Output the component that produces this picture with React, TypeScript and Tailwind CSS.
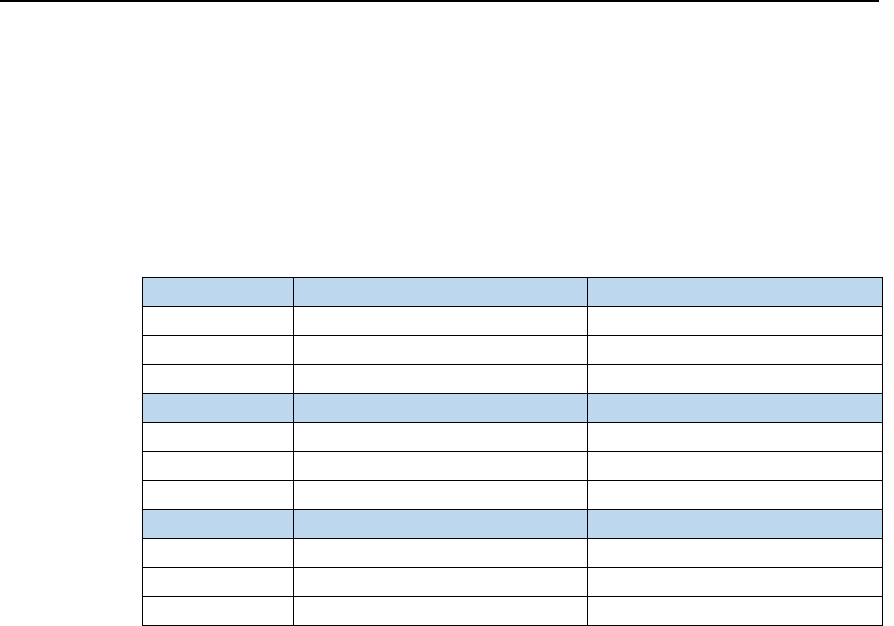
const rows = ["h", "r", "r", "r", "h", "r", "r", "r", "h", "r", "r", "r"];

export default function App() {
  return (
    <div className="w-[894px] h-[626px] bg-white overflow-hidden font-['Liberation_Sans',sans-serif]">
      {/* top rule */}
      <div className="h-[2px] w-[879px] bg-black" />

      {/* table */}
      <div className="pt-[275px] pl-[142px]">
        <table className="border-collapse table-fixed w-[740px]">
          <colgroup>
            <col className="w-[151px]" />
            <col className="w-[294px]" />
            <col className="w-[295px]" />
          </colgroup>
          <tbody>
            {rows.map((kind, i) => (
              <tr key={i} className={kind === "h" ? "bg-[#bdd7ee] h-[29px]" : "bg-white h-[29px]"}>
                <td className="border border-black p-0" />
                <td className="border border-black p-0" />
                <td className="border border-black p-0" />
              </tr>
            ))}
          </tbody>
        </table>
      </div>
    </div>
  );
}
